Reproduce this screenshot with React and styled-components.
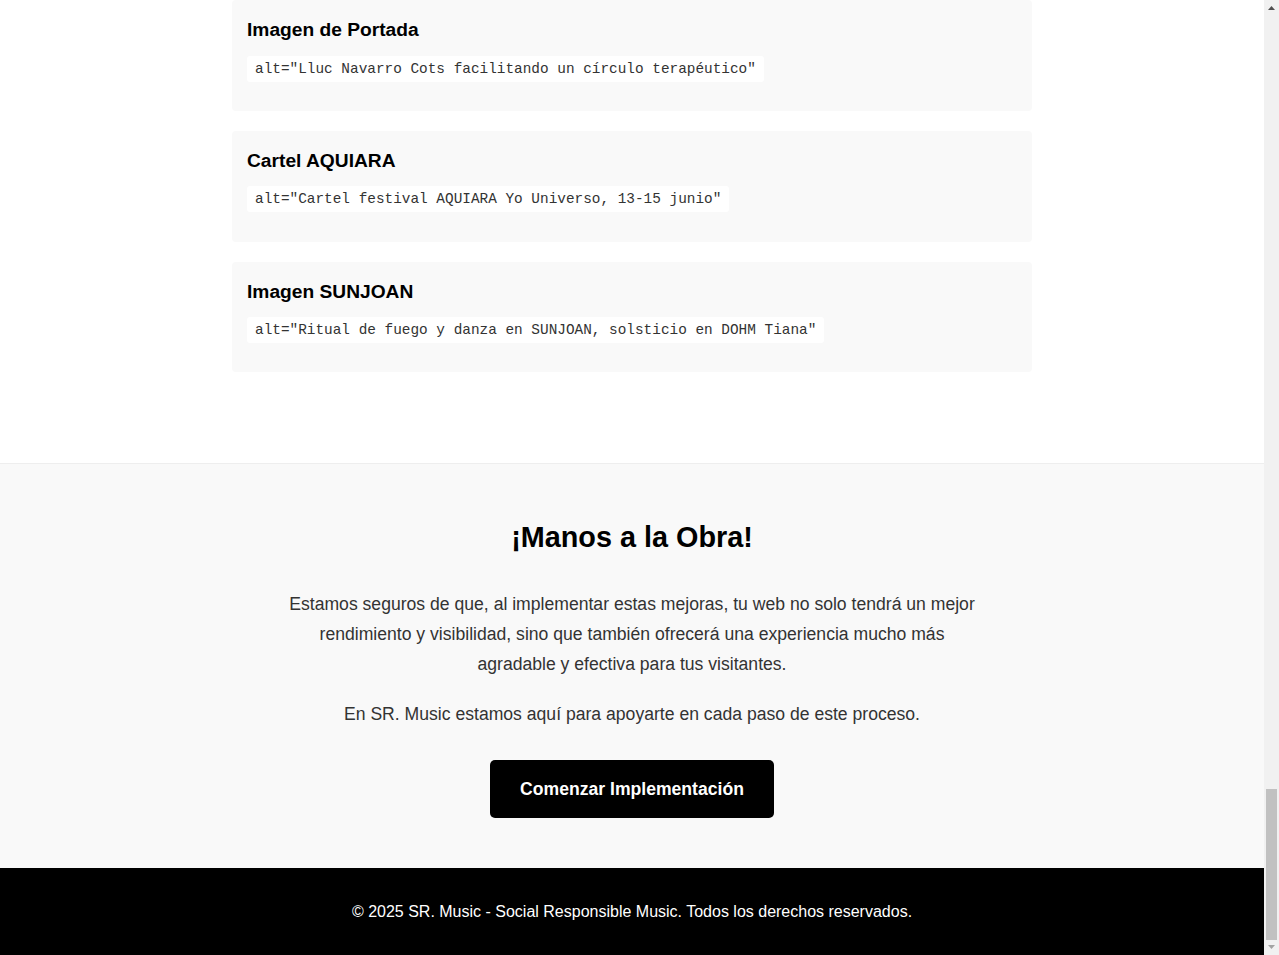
import React from 'react'
import styled, { createGlobalStyle } from 'styled-components'

const GlobalStyle = createGlobalStyle`
  html, body {
    overflow: hidden;
  }
  body {
    margin: 0;
    font-family: "Liberation Sans", Arial, sans-serif;
    line-height: 1.6;
    color: #333;
    background: #fff;
  }
`

const altTexts = [
  { title: 'Imagen de Portada', alt: 'Lluc Navarro Cots facilitando un círculo terapéutico' },
  { title: 'Cartel AQUIARA', alt: 'Cartel festival AQUIARA Yo Universo, 13-15 junio' },
  { title: 'Imagen SUNJOAN', alt: 'Ritual de fuego y danza en SUNJOAN, solsticio en DOHM Tiana' },
]

const Arrow = ({ down, color }) => (
  <svg width="7" height="4" viewBox="0 0 7 4">
    <polygon points={down ? '0,0 7,0 3.5,4' : '0,4 7,4 3.5,0'} fill={color} />
  </svg>
)

export default function App() {
  return (
    <>
      <GlobalStyle />
      <Shell>
        <Page>
          <Container>
            {altTexts.map((item) => (
              <Card key={item.title}>
                <CardTitle>{item.title}</CardTitle>
                <CardText>
                  <Code>alt="{item.alt}"</Code>
                </CardText>
              </Card>
            ))}
          </Container>

          <Cta>
            <CtaTitle>¡Manos a la Obra!</CtaTitle>
            <CtaText>
              Estamos seguros de que, al implementar estas mejoras, tu web no solo tendrá un mejor
              rendimiento y visibilidad, sino que también ofrecerá una experiencia mucho más
              agradable y efectiva para tus visitantes.
            </CtaText>
            <CtaText>En SR. Music estamos aquí para apoyarte en cada paso de este proceso.</CtaText>
            <ButtonRow>
              <CtaButton href="#">Comenzar Implementación</CtaButton>
            </ButtonRow>
          </Cta>

          <Footer>© 2025 SR. Music - Social Responsible Music. Todos los derechos reservados.</Footer>
        </Page>

        <ScrollBar>
          <ArrowBox>
            <Arrow color="#505050" />
          </ArrowBox>
          <Track>
            <Thumb />
          </Track>
          <ArrowBox $bottom>
            <Arrow down color="#a3a3a3" />
          </ArrowBox>
        </ScrollBar>
      </Shell>
    </>
  )
}

const Shell = styled.div`
  display: flex;
`

const Page = styled.div`
  flex: 1;
  min-width: 0;
`

const Container = styled.div`
  max-width: 800px;
  margin: 0 auto;
  padding-bottom: 71px;
`

const Card = styled.div`
  background: #f9f9f9;
  border-radius: 4px;
  padding: 15px;
  margin-bottom: 20px;
`

const CardTitle = styled.h3`
  margin: 0 0 9px;
  font-size: 1.2rem;
  line-height: 1.6;
  color: #000;
`

const CardText = styled.p`
  margin: 0 0 15px;
`

const Code = styled.code`
  background: #fff;
  padding: 5px 8px;
  border-radius: 3px;
  font-family: "Liberation Mono", "Courier New", monospace;
  font-size: 0.9em;
  color: #333;
`

const Cta = styled.section`
  background: #f9f9f9;
  border-top: 1px solid #eee;
  padding: 50px 20px;
  text-align: center;
`

const CtaTitle = styled.h2`
  margin: 0 0 30px;
  font-size: 1.8rem;
  line-height: 1.6;
  color: #000;
`

const CtaText = styled.p`
  max-width: 700px;
  margin: 0 auto 20px;
  font-size: 1.1rem;
  line-height: 1.7;
  color: #333;
`

const ButtonRow = styled.div`
  display: flex;
  justify-content: center;
  margin-top: 30px;
`

const CtaButton = styled.a`
  display: inline-block;
  background: #000;
  color: #fff;
  text-decoration: none;
  padding: 18px 30px;
  font-size: 1.1rem;
  font-weight: bold;
  line-height: 22px;
  border-radius: 5px;
`

const Footer = styled.footer`
  background: #000;
  color: #fff;
  text-align: center;
  padding: 30px 20px;
  font-size: 16px;
  line-height: 1.7;
`

const ScrollBar = styled.aside`
  width: 15px;
  flex-shrink: 0;
  display: flex;
  flex-direction: column;
  background: #f1f1f1;
`

const ArrowBox = styled.div`
  height: 15px;
  display: flex;
  justify-content: center;
  align-items: ${({ $bottom }) => ($bottom ? 'flex-start' : 'flex-end')};
  padding: ${({ $bottom }) => ($bottom ? '5px 0 0' : '0 0 5px')};
  box-sizing: border-box;
`

const Track = styled.div`
  flex: 1;
  display: flex;
  flex-direction: column;
  justify-content: flex-end;
  padding: 0 2px;
`

const Thumb = styled.div`
  height: 151px;
  background: #c1c1c1;
`
